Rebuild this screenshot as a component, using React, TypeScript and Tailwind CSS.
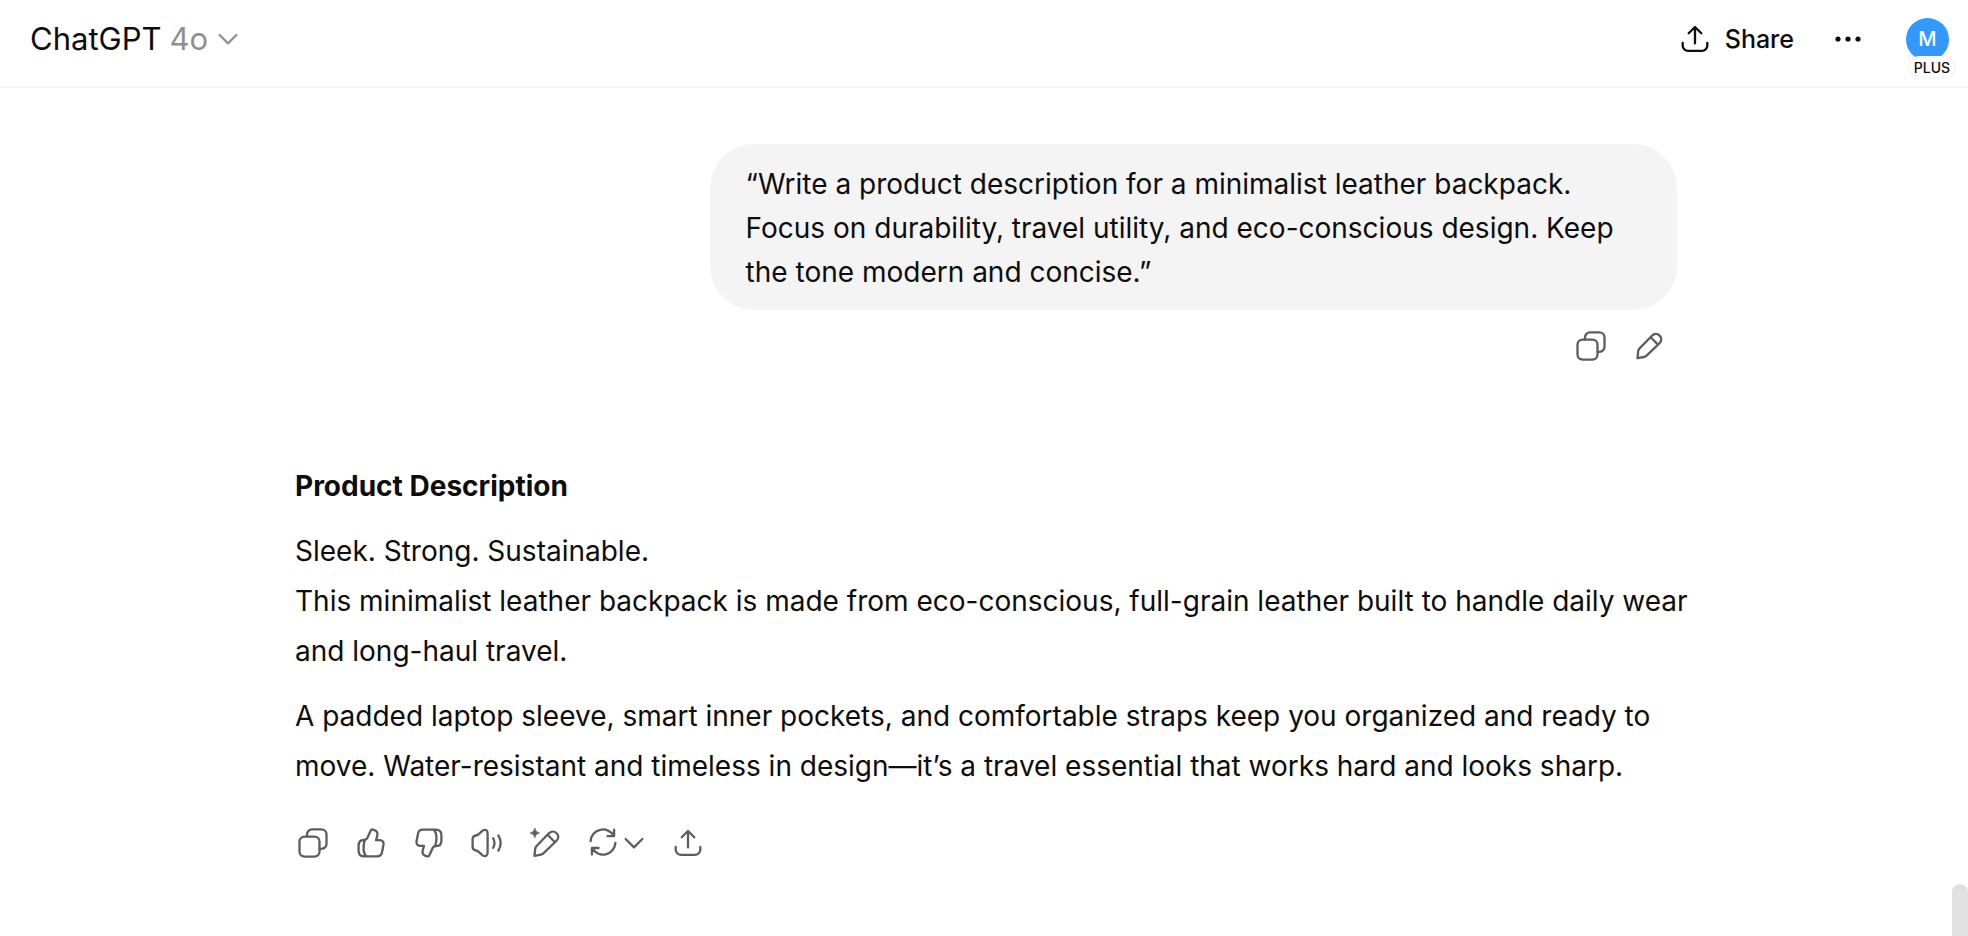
import type { ReactNode } from "react";

type IconProps = { children: ReactNode; className?: string };

function Icon({ children, className = "size-8" }: IconProps) {
  return (
    <svg
      viewBox="0 0 32 32"
      className={className}
      fill="none"
      stroke="currentColor"
      strokeWidth="2.3"
      strokeLinecap="round"
      strokeLinejoin="round"
      aria-hidden="true"
    >
      {children}
    </svg>
  );
}

const CopyIcon = () => (
  <Icon>
    <rect x="2.5" y="9.6" width="20" height="20" rx="5" />
    <path d="M10 9.4V7.4a5 5 0 0 1 5-5h9.5a5 5 0 0 1 5 5v9.5a5 5 0 0 1-5 5h-1.8" />
  </Icon>
);

const pencilPath =
  "M4.5 28.2 5.2 21.2Q5.4 19.6 6.6 18.4L18.9 5.7C21.3 3.3 24.4 3.4 26.6 5.6S28.9 10.8 26.5 13.2L13.6 25.6Q12.5 26.7 10.9 27ZM17.6 7.2 25 14.6";

const PencilIcon = () => (
  <Icon>
    <path d={pencilPath} />
  </Icon>
);

const thumbPath =
  "M15.4 4.2C15.9 2.9 16.8 2.3 18 2.6 21.6 3.4 23.1 5.6 22.3 8.4L21 13.2H24.8C27.6 13.2 29 15 28.5 17.5L27 25.3C26.5 28 24.6 29.4 22 29.4H9.5C5.7 29.4 3.6 27.4 3.6 24V18.6C3.6 15 5.4 13 8.7 13 10.6 13 11.7 12.3 12.3 10.9ZM9.9 13.2C8.3 17.4 7.5 25 11 29.2";

const ThumbUpIcon = () => (
  <Icon>
    <path d={thumbPath} />
  </Icon>
);

const ThumbDownIcon = () => (
  <Icon>
    <path d={thumbPath} transform="rotate(180 16 16)" />
  </Icon>
);

const SpeakerIcon = () => (
  <Icon>
    <path d="M1.6 12.2C1.6 9.8 2.7 8.8 5 8.5 6.4 8.3 7.3 7.6 8.3 6.6L11.6 3.7C14 1.9 16.6 3 16.6 6.2V25.8C16.6 29 14 30.1 11.6 28.3L8.3 25.4C7.3 24.4 6.4 23.7 5 23.5 2.7 23.2 1.6 22.2 1.6 19.8Z" />
    <path d="M22.2 11.2Q24.8 16 22.2 20.8M27.4 8.4Q31.9 16 27.4 23.6" />
  </Icon>
);

const MagicPencilIcon = () => (
  <Icon>
    <path d={pencilPath} transform="translate(1 .6)" />
    <path
      d="M5.8 1.4Q6.4 5.3 10.4 6 6.4 6.7 5.8 10.6 5.2 6.7 1.2 6 5.2 5.3 5.8 1.4Z"
      fill="currentColor"
      strokeWidth=".8"
    />
  </Icon>
);

const RefreshIcon = () => (
  <Icon>
    <path d="M3.6 14.2A12.4 12.4 0 0 1 26.9 9M27.1 2.6V9.1H20.4M28.4 15.9A12.4 12.4 0 0 1 5.1 21.1M4.9 27.5V21H11.6" />
  </Icon>
);

const ShareIcon = () => (
  <Icon>
    <path d="M16 20.4V4.2M9.7 10.2 16 4 22.3 10.2M3.7 20V22.4A5.4 5.4 0 0 0 9.1 27.8H22.9A5.4 5.4 0 0 0 28.3 22.4V20" />
  </Icon>
);

const ChevronIcon = () => (
  <svg
    viewBox="0 0 24 24"
    className="size-6"
    fill="none"
    stroke="currentColor"
    strokeWidth="2.2"
    strokeLinecap="round"
    strokeLinejoin="round"
    aria-hidden="true"
  >
    <path d="M3.6 8 12 16.4 20.4 8" />
  </svg>
);

function IconButton({ label, children }: { label: string; children: ReactNode }) {
  return (
    <button type="button" aria-label={label} className="flex items-center gap-[3px]">
      {children}
    </button>
  );
}

function Header() {
  return (
    <header className="flex h-[88px] items-center justify-between border-b-2 border-[#f5f5f5] pr-[19px] pb-2 pl-[30px]">
      <button type="button" className="flex items-center gap-2 text-[31px] leading-10">
        <span>ChatGPT</span>
        <span className="text-[#8f8f8f]">4o</span>
        <span className="text-[#8f8f8f]">
          <ChevronIcon />
        </span>
      </button>
      <div className="flex items-center">
        <button type="button" className="flex items-center gap-[14px] text-[25px] leading-8 font-medium">
          <ShareIcon />
          Share
        </button>
        <button type="button" aria-label="More options" className="ml-[38px]">
          <svg viewBox="0 0 32 32" className="size-8" fill="currentColor" aria-hidden="true">
            <circle cx="6" cy="16" r="2.6" />
            <circle cx="16" cy="16" r="2.6" />
            <circle cx="26" cy="16" r="2.6" />
          </svg>
        </button>
        <button type="button" aria-label="Account" className="relative ml-[42px] size-[43px]">
          <span className="flex size-full items-center justify-center rounded-full bg-[#3399ff] text-[20px] font-medium text-white">
            M
          </span>
          <span className="absolute top-[38px] left-[2px] flex h-[23px] w-12 items-center justify-center rounded-full border-2 border-[#f7f7f7] bg-white text-[14px] font-medium">
            PLUS
          </span>
        </button>
      </div>
    </header>
  );
}

export default function App() {
  return (
    <div className="relative min-h-screen bg-white font-['Inter','Liberation_Sans',sans-serif] text-[28px] text-[#0d0d0d]">
      <Header />
      <main className="mx-auto max-w-[1386px] pt-14 pb-16 pl-1">
        <section className="flex flex-col items-end">
          <p className="w-[70%] rounded-[44px] bg-[#f4f4f4] px-9 pt-[18px] pb-4 leading-[44px]">
            “Write a product description for a minimalist leather backpack. Focus on durability,
            travel utility, and eco-conscious design. Keep the tone modern and concise.”
          </p>
          <div className="mt-5 mr-3 flex gap-[26px] text-[#5d5d5d]">
            <IconButton label="Copy message">
              <CopyIcon />
            </IconButton>
            <IconButton label="Edit message">
              <PencilIcon />
            </IconButton>
          </div>
        </section>
        <section className="mt-[99px]">
          <div className="-mr-4 flex flex-col gap-[15px] leading-[50px]">
            <h2 className="font-bold">Product Description</h2>
            <p>
              Sleek. Strong. Sustainable.
              <br />
              This minimalist leather backpack is made from eco-conscious, full-grain leather built
              to handle daily wear and long-haul travel.
            </p>
            <p>
              A padded laptop sleeve, smart inner pockets, and comfortable straps keep you organized
              and ready to move. Water-resistant and timeless in design—it’s a travel essential that
              works hard and looks sharp.
            </p>
          </div>
          <div className="mt-9 ml-0.5 flex gap-[26px] text-[#5d5d5d]">
            <IconButton label="Copy response">
              <CopyIcon />
            </IconButton>
            <IconButton label="Good response">
              <ThumbUpIcon />
            </IconButton>
            <IconButton label="Bad response">
              <ThumbDownIcon />
            </IconButton>
            <IconButton label="Read aloud">
              <SpeakerIcon />
            </IconButton>
            <IconButton label="Edit in canvas">
              <MagicPencilIcon />
            </IconButton>
            <IconButton label="Switch model">
              <RefreshIcon />
              <ChevronIcon />
            </IconButton>
            <IconButton label="Share response">
              <ShareIcon />
            </IconButton>
          </div>
        </section>
      </main>
      <div className="absolute right-0 bottom-0 h-[52px] w-4 rounded-t-full bg-[#e1e1e1]" />
    </div>
  );
}
